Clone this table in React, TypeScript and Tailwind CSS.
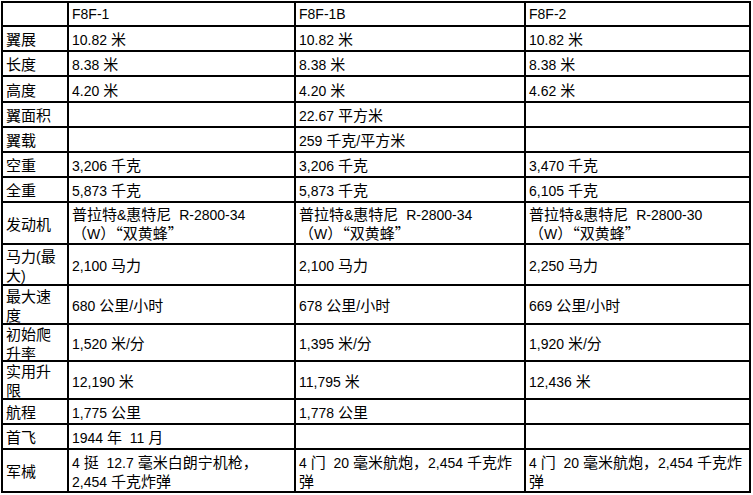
import React from 'react'

const ROWS: { label: string[]; cells: string[][]; h: number }[] = [
  { label: [''], cells: [['F8F-1'], ['F8F-1B'], ['F8F-2']], h: 24 },
  { label: ['翼展'], cells: [['10.82 米'], ['10.82 米'], ['10.82 米']], h: 25 },
  { label: ['长度'], cells: [['8.38 米'], ['8.38 米'], ['8.38 米']], h: 25 },
  { label: ['高度'], cells: [['4.20 米'], ['4.20 米'], ['4.62 米']], h: 26 },
  { label: ['翼面积'], cells: [[''], ['22.67 平方米'], ['']], h: 25 },
  { label: ['翼载'], cells: [[''], ['259 千克/平方米'], ['']], h: 25 },
  { label: ['空重'], cells: [['3,206 千克'], ['3,206 千克'], ['3,470 千克']], h: 25 },
  { label: ['全重'], cells: [['5,873 千克'], ['5,873 千克'], ['6,105 千克']], h: 25 },
  {
    label: ['发动机'],
    cells: [
      ['普拉特&惠特尼  R-2800-34', '（W）“双黄蜂”'],
      ['普拉特&惠特尼  R-2800-34', '（W）“双黄蜂”'],
      ['普拉特&惠特尼  R-2800-30', '（W）“双黄蜂”'],
    ],
    h: 42,
  },
  { label: ['马力(最', '大)'], cells: [['2,100 马力'], ['2,100 马力'], ['2,250 马力']], h: 41 },
  { label: ['最大速', '度'], cells: [['680 公里/小时'], ['678 公里/小时'], ['669 公里/小时']], h: 39 },
  { label: ['初始爬', '升率'], cells: [['1,520 米/分'], ['1,395 米/分'], ['1,920 米/分']], h: 37 },
  { label: ['实用升', '限'], cells: [['12,190 米'], ['11,795 米'], ['12,436 米']], h: 38 },
  { label: ['航程'], cells: [['1,775 公里'], ['1,778 公里'], ['']], h: 25 },
  { label: ['首飞'], cells: [['1944 年  11 月'], [''], ['']], h: 25 },
  {
    label: ['军械'],
    cells: [
      ['4 挺  12.7 毫米白朗宁机枪，', '2,454 千克炸弹'],
      ['4 门  20 毫米航炮，2,454 千克炸', '弹'],
      ['4 门  20 毫米航炮，2,454 千克炸', '弹'],
    ],
    h: 43,
  },
]

const CJK = /[\u3000-\u9fff\uff00-\uffef\u201c\u201d]/

/** 중문은 넓게, 라틴은 Arial 폭으로 */
function Mixed({ s }: { s: string }) {
  const runs: { cjk: boolean; t: string }[] = []
  for (const ch of s) {
    const cjk = CJK.test(ch)
    const last = runs[runs.length - 1]
    if (last && last.cjk === cjk) last.t += ch
    else runs.push({ cjk, t: ch })
  }
  return (
    <>
      {runs.map((r, i) =>
        r.cjk ? (
          <span key={i} className="font-['Noto_Sans_CJK_SC',sans-serif] text-[15px] leading-[19px]">
            {r.t}
          </span>
        ) : (
          <span key={i} className="whitespace-pre leading-[19px]">
            {r.t}
          </span>
        ),
      )}
    </>
  )
}

function Cell({ lines, h }: { lines: string[]; h: number }) {
  return (
    <div
      className="flex flex-col justify-center border-r-2 border-b-2 border-black px-[3px]"
      style={{ height: h }}
    >
      {lines.map((l, i) => (
        <div key={i} className="h-[19px] whitespace-nowrap leading-[19px]">
          <Mixed s={l} />
        </div>
      ))}
    </div>
  )
}

export default function App() {
  return (
    <div className="h-[495px] w-[753px] overflow-hidden bg-white pt-[1px] pl-[1px] font-['Liberation_Sans','Noto_Sans_CJK_SC',sans-serif] text-[14px] text-black">
      <div className="grid w-max grid-cols-[66px_227px_230px_225px] border-t-2 border-l-2 border-black">
        {ROWS.map((r, i) => (
          <React.Fragment key={i}>
            <Cell lines={r.label} h={r.h} />
            {r.cells.map((c, j) => (
              <Cell key={j} lines={c} h={r.h} />
            ))}
          </React.Fragment>
        ))}
      </div>
    </div>
  )
}
